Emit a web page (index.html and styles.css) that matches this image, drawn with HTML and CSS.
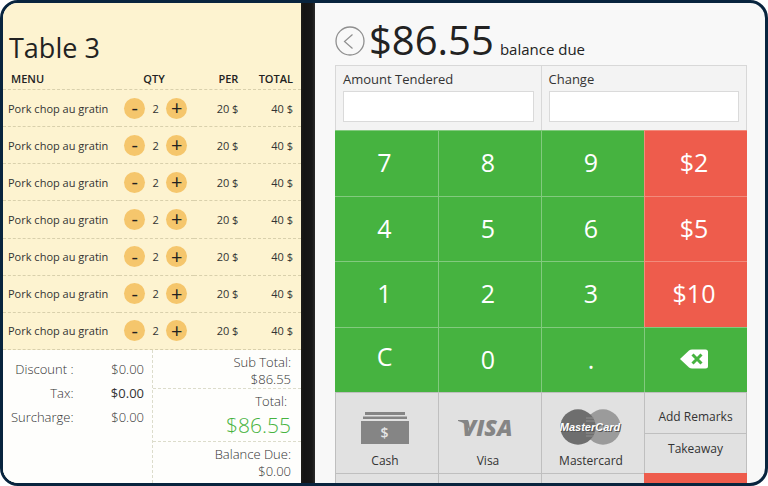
FILE: index.html
```html
<!DOCTYPE html>
<html lang="en">
<head>
    <meta charset="UTF-8">
    <meta name="viewport" content="width=device-width, initial-scale=1.0">
    <title>Table 3 - Payment</title>
    <link rel="stylesheet" href="styles.css">
</head>
<body>
    <div class="screen">
        <section class="bill">
            <h1 class="bill-title">Table 3</h1>

            <div class="order">
                <table class="order-table">
                    <thead>
                        <tr>
                            <th class="col-menu">MENU</th>
                            <th class="col-qty">QTY</th>
                            <th class="col-per">PER</th>
                            <th class="col-total">TOTAL</th>
                        </tr>
                    </thead>
                    <tbody>
                        <tr>
                            <td>Pork chop au gratin</td>
                            <td><div class="qty"><button class="step" aria-label="Less">-</button><span>2</span><button class="step" aria-label="More">+</button></div></td>
                            <td class="num">20 $</td>
                            <td class="num">40 $</td>
                        </tr>
                        <tr>
                            <td>Pork chop au gratin</td>
                            <td><div class="qty"><button class="step" aria-label="Less">-</button><span>2</span><button class="step" aria-label="More">+</button></div></td>
                            <td class="num">20 $</td>
                            <td class="num">40 $</td>
                        </tr>
                        <tr>
                            <td>Pork chop au gratin</td>
                            <td><div class="qty"><button class="step" aria-label="Less">-</button><span>2</span><button class="step" aria-label="More">+</button></div></td>
                            <td class="num">20 $</td>
                            <td class="num">40 $</td>
                        </tr>
                        <tr>
                            <td>Pork chop au gratin</td>
                            <td><div class="qty"><button class="step" aria-label="Less">-</button><span>2</span><button class="step" aria-label="More">+</button></div></td>
                            <td class="num">20 $</td>
                            <td class="num">40 $</td>
                        </tr>
                        <tr>
                            <td>Pork chop au gratin</td>
                            <td><div class="qty"><button class="step" aria-label="Less">-</button><span>2</span><button class="step" aria-label="More">+</button></div></td>
                            <td class="num">20 $</td>
                            <td class="num">40 $</td>
                        </tr>
                        <tr>
                            <td>Pork chop au gratin</td>
                            <td><div class="qty"><button class="step" aria-label="Less">-</button><span>2</span><button class="step" aria-label="More">+</button></div></td>
                            <td class="num">20 $</td>
                            <td class="num">40 $</td>
                        </tr>
                        <tr>
                            <td>Pork chop au gratin</td>
                            <td><div class="qty"><button class="step" aria-label="Less">-</button><span>2</span><button class="step" aria-label="More">+</button></div></td>
                            <td class="num">20 $</td>
                            <td class="num">40 $</td>
                        </tr>
                    </tbody>
                </table>
            </div>

            <div class="summary">
                <dl class="charges">
                    <dt>Discount :</dt><dd>$0.00</dd>
                    <dt>Tax:</dt><dd class="strong">$0.00</dd>
                    <dt>Surcharge:</dt><dd>$0.00</dd>
                </dl>
                <div class="totals">
                    <div class="total-box">
                        <div>Sub Total:</div>
                        <div>$86.55</div>
                    </div>
                    <div class="total-box grand">
                        <div class="total-label">Total:</div>
                        <div class="total-amount">$86.55</div>
                    </div>
                    <div class="total-box">
                        <div>Balance Due:</div>
                        <div>$0.00</div>
                    </div>
                </div>
            </div>
        </section>

        <div class="divider"></div>

        <section class="payment">
            <header class="balance">
                <button class="back" aria-label="Back">
                    <svg width="30" height="30" viewBox="0 0 30 30" fill="none" stroke="#8f8f8f">
                        <circle cx="15" cy="15" r="14" stroke-width="1.3"/>
                        <path d="M17.500 8.500 L9.500 15.500 L17.500 22.500" stroke-width="1.2"/>
                    </svg>
                </button>
                <span class="balance-amount">$86.55</span>
                <span class="balance-label">balance due</span>
            </header>

            <div class="tender">
                <div class="field">
                    <label for="tendered">Amount Tendered</label>
                    <input type="text" id="tendered">
                </div>
                <div class="field">
                    <label for="change">Change</label>
                    <input type="text" id="change">
                </div>
            </div>

            <div class="keypad">
                <button class="key">7</button>
                <button class="key">8</button>
                <button class="key">9</button>
                <button class="key quick">$2</button>
                <button class="key">4</button>
                <button class="key">5</button>
                <button class="key">6</button>
                <button class="key quick">$5</button>
                <button class="key">1</button>
                <button class="key">2</button>
                <button class="key">3</button>
                <button class="key quick">$10</button>
                <button class="key clear">C</button>
                <button class="key">0</button>
                <button class="key">.</button>
                <button class="key" aria-label="Delete">
                    <svg width="30" height="20" viewBox="0 0 30 20">
                        <path d="M1 10 L10 1.4 Q11.400 0.500 13 0.500 H26.500 Q29 0.500 29 3 V17 Q29 19.500 26.500 19.500 H13 Q11.400 19.500 10 18.600 Z" fill="#fff"/>
                        <path d="M13.500 5.500 L22.500 14.500 M22.500 5.500 L13.500 14.500" stroke="#46b340" stroke-width="3"/>
                    </svg>
                </button>
            </div>

            <div class="methods">
                <button class="method">
                    <svg width="50" height="34" viewBox="0 0 50 34">
                        <g fill="#858585">
                            <rect x="5" y="1" width="40" height="3"/>
                            <rect x="3" y="5.500" width="44" height="2.500"/>
                            <rect x="1" y="10" width="48" height="23"/>
                        </g>
                        <text class="logo-cash" x="24.500" y="27" text-anchor="middle">$</text>
                    </svg>
                    <span>Cash</span>
                </button>
                <button class="method">
                    <svg width="60" height="34" viewBox="0 0 60 34">
                        <path d="M0 9 H8 Q10.500 9 11 12 L12.500 20 Q8 11.500 0 10 Z" fill="#858585"/>
                        <text class="logo-visa" x="4" y="25">VISA</text>
                    </svg>
                    <span>Visa</span>
                </button>
                <button class="method">
                    <svg width="62" height="36" viewBox="0 0 62 36">
                        <circle cx="43" cy="18" r="17.700" fill="#9b9b9b"/>
                        <circle cx="18" cy="18" r="17.700" fill="#6e6e6e"/>
                        <path d="M26 9 H34 M26 12 H35 M26 24 H35 M26 27 H34" stroke="#8f8f8f"/>
                        <text class="logo-mc shade" x="31" y="23" text-anchor="middle">MasterCard</text>
                        <text class="logo-mc" x="30" y="22" text-anchor="middle">MasterCard</text>
                    </svg>
                    <span>Mastercard</span>
                </button>
                <div class="extras">
                    <button class="extra">Add Remarks</button>
                    <button class="extra">Takeaway</button>
                </div>
            </div>

            <div class="next-row">
                <div></div>
                <div></div>
                <div></div>
                <div class="next-red"></div>
            </div>
        </section>
    </div>
</body>
</html>
```

FILE: styles.css
```css
* {
    margin: 0;
    padding: 0;
    box-sizing: border-box;
}

body {
    font-family: 'Open Sans', 'Noto Sans', sans-serif;
    background: #fff;
    color: #333;
}

button {
    font: inherit;
    color: inherit;
    background: none;
    border: none;
    cursor: pointer;
}

.screen {
    display: grid;
    grid-template-columns: 298fr 14px 450fr;
    grid-template-rows: 100%;
    height: 100vh;
    border: 3px solid #08243e;
    border-radius: 18px;
    overflow: hidden;
    background: #f8f8f8;
}

/* bill */
.bill {
    min-width: 0;
    display: flex;
    flex-direction: column;
    background: #fdf3d0;
}

.bill-title {
    padding: 25px 6px 0;
    font-size: 27px;
    font-weight: 400;
    line-height: 40px;
    color: #222;
}

.order {
    flex: 1;
    min-height: 0;
}

.order-table {
    width: 100%;
    height: 100%;
    table-layout: fixed;
    border-collapse: separate;
    border-spacing: 0;
    font-size: 11px;
}

.order-table th {
    height: 22px;
    font-size: 11px;
    font-weight: 600;
    line-height: 20px;
    text-align: right;
    color: #222;
    border-bottom: 1px dashed #d9d0ac;
}

.order-table td {
    padding-left: 5px;
    border-bottom: 1px dashed #d9d0ac;
    white-space: nowrap;
}

.order-table .col-menu {
    width: 39%;
    padding-left: 8px;
    text-align: left;
}

.order-table .col-qty {
    width: 25%;
    padding-right: 5px;
    text-align: center;
}

.order-table .col-per {
    width: 15%;
}

.order-table .col-total,
.order-table .num {
    text-align: right;
}

.order-table .col-total,
.order-table .num:last-child {
    padding-right: 8px;
}

.qty {
    display: flex;
    align-items: center;
    justify-content: space-between;
    width: 63px;
}

.step {
    width: 21px;
    height: 21px;
    border-radius: 50%;
    background: #f5c66c;
    color: #222;
    font-size: 20px;
    line-height: 20px;
}

.summary {
    display: grid;
    grid-template-columns: 1fr 1fr;
    height: 133px;
    background: #fefefc;
    font-size: 13px;
    font-weight: 300;
}

.charges {
    display: grid;
    grid-template-columns: 1fr 1fr;
    align-content: start;
    padding: 7px 8px 0 0;
    line-height: 24px;
    text-align: right;
}

.charges .strong {
    font-weight: 400;
}

.totals {
    border-left: 1px dashed #dcdccb;
    text-align: right;
    line-height: 17px;
}

.total-box {
    padding: 4px 10px 0 0;
}

.grand {
    padding-bottom: 1px;
    border-top: 1px dashed #dcdccb;
    border-bottom: 1px dashed #dcdccb;
}

.total-label {
    padding-right: 4px;
}

.total-amount {
    font-size: 21px;
    line-height: 30px;
    color: #46b340;
}

.divider {
    background: linear-gradient(90deg, #1d1c18, #141414 3px, #181818 11px, #2c2c2c);
}

/* payment */
.payment {
    min-width: 0;
    display: flex;
    flex-direction: column;
    padding: 0 18px 0 20px;
}

.balance {
    display: flex;
    align-items: baseline;
    height: 62px;
    padding-top: 10px;
    color: #222;
}

.back {
    align-self: center;
    height: 30px;
    margin-top: 4px;
}

.back svg {
    display: block;
}

.balance-amount {
    padding: 0 6px 0 4px;
    font-size: 40px;
    line-height: 54px;
}

.balance-label {
    font-size: 15px;
}

.tender {
    display: flex;
    height: 65px;
    background: #f3f3f3;
    border: 1px solid #d8d8d8;
    border-bottom: none;
}

.field {
    flex: 1;
    padding: 3px 7px 0;
}

.field + .field {
    border-left: 1px solid #d8d8d8;
}

.field label {
    display: block;
    margin-bottom: 1px;
    font-size: 13px;
    line-height: 21px;
}

.field input {
    width: 100%;
    height: 31px;
    border: 1px solid #dadada;
    background: #fff;
}

.keypad {
    flex: 1;
    display: grid;
    grid-template-columns: repeat(4, 1fr);
    grid-template-rows: repeat(4, 1fr);
}

.key {
    display: flex;
    align-items: center;
    justify-content: center;
    padding: 0 4px 2px 0;
    background: #46b340;
    border-top: 1px solid #82ca7e;
    border-left: 1px solid #82ca7e;
    color: #fff;
    font-size: 25px;
}

.key:nth-child(4n+1) {
    border-left: none;
}

.quick {
    background: #ee5c4c;
    border-color: #f28b7c;
}

.clear {
    padding-bottom: 8px;
}

.methods {
    display: grid;
    grid-template-columns: repeat(4, 1fr);
    height: 81px;
    background: #e1e1e1;
    font-size: 12px;
}

.method {
    display: flex;
    flex-direction: column;
    align-items: center;
    justify-content: flex-end;
    gap: 7px;
    padding: 0 4px 3px 0;
    border-top: 1px solid #bfbfbf;
    border-left: 1px solid #bfbfbf;
    line-height: 18px;
}

.extras {
    display: grid;
    grid-template-rows: 1fr 1fr;
    border-right: 1px solid #bfbfbf;
}

.extra {
    padding-top: 8px;
    border-top: 1px solid #bfbfbf;
    border-left: 1px solid #bfbfbf;
}

.extra:last-child {
    padding: 0 0 10px;
}

.next-row {
    display: grid;
    grid-template-columns: repeat(4, 1fr);
    height: 10px;
    background: #e1e1e1;
}

.next-row div {
    border-top: 1px solid #bfbfbf;
    border-left: 1px solid #bfbfbf;
}

.next-row .next-red {
    background: #ee5c4c;
    border: none;
}

.logo-cash {
    font-size: 14px;
    font-weight: 600;
    fill: #e6e6e6;
}

.logo-visa {
    font-size: 23px;
    font-weight: 800;
    font-style: italic;
    fill: #858585;
}

.logo-mc {
    font-family: 'Liberation Sans', Arial, sans-serif;
    font-size: 11px;
    font-weight: 700;
    font-style: italic;
    fill: #fff;
}

.shade {
    fill: #555;
}
```
